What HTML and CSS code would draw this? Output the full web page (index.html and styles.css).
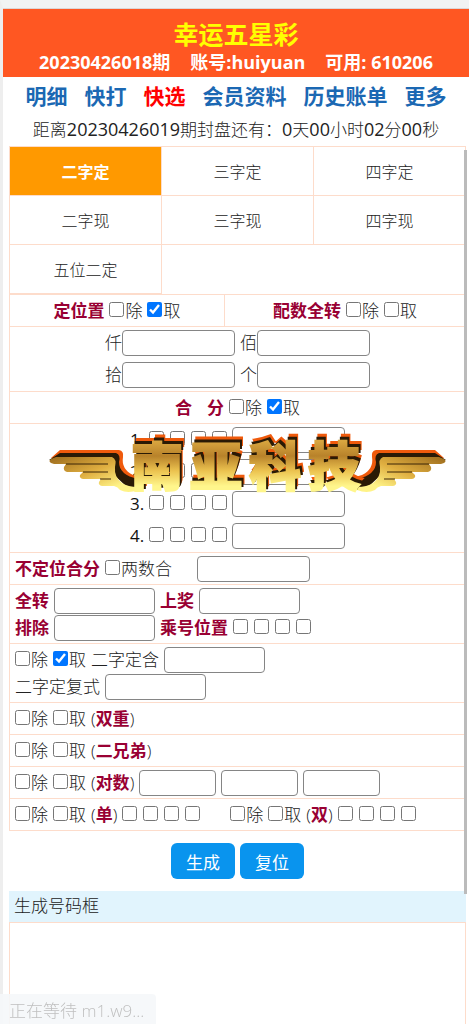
FILE: index.html
```html
<!DOCTYPE html>
<html lang="zh-CN">
<head>
    <meta charset="UTF-8">
    <meta name="viewport" content="width=device-width, initial-scale=1.0">
    <title>幸运五星彩</title>
    <link rel="stylesheet" href="styles.css">
</head>
<body>
    <header class="header">
        <h1>幸运五星彩</h1>
        <div class="account">
            <span>20230426018期</span>
            <span>账号:huiyuan</span>
            <span>可用: 610206</span>
        </div>
    </header>
    <nav class="nav">
        <a href="#">明细</a>
        <a href="#">快打</a>
        <a href="#" class="active">快选</a>
        <a href="#">会员资料</a>
        <a href="#">历史账单</a>
        <a href="#">更多</a>
    </nav>
    <div class="countdown">距离<span>20230426019</span>期封盘还有：<span>0</span>天<span>00</span>小时<span>02</span>分<span>00</span>秒</div>

    <main class="content">
        <div class="tabs">
            <button type="button" class="tab active">二字定</button>
            <button type="button" class="tab">三字定</button>
            <button type="button" class="tab">四字定</button>
            <button type="button" class="tab">二字现</button>
            <button type="button" class="tab">三字现</button>
            <button type="button" class="tab">四字现</button>
            <button type="button" class="tab">五位二定</button>
        </div>

        <form id="pickForm">
            <div class="panel split">
                <div class="line center">
                    <b>定位置</b>
                    <label><input type="checkbox">除</label>
                    <label><input type="checkbox" checked>取</label>
                </div>
                <div class="line center">
                    <b>配数全转</b>
                    <label><input type="checkbox">除</label>
                    <label><input type="checkbox">取</label>
                </div>
            </div>

            <div class="panel digits">
                <div class="line center">
                    <label class="field">仟<input type="text"></label>
                    <label class="field">佰<input type="text"></label>
                </div>
                <div class="line center">
                    <label class="field">拾<input type="text"></label>
                    <label class="field">个<input type="text"></label>
                </div>
            </div>

            <div class="panel">
                <div class="line center">
                    <b class="spread"><span>合</span><span>分</span></b>
                    <label><input type="checkbox">除</label>
                    <label><input type="checkbox" checked>取</label>
                </div>
            </div>

            <div class="panel sums">
                <div class="line center">
                    <span class="index">1.</span>
                    <span class="boxes"><input type="checkbox" aria-label="仟"><input type="checkbox" aria-label="佰"><input type="checkbox" aria-label="拾"><input type="checkbox" aria-label="个"></span>
                    <input type="text" aria-label="合分1">
                </div>
                <div class="line center">
                    <span class="index">2.</span>
                    <span class="boxes"><input type="checkbox" aria-label="仟"><input type="checkbox" aria-label="佰"><input type="checkbox" aria-label="拾"><input type="checkbox" aria-label="个"></span>
                    <input type="text" aria-label="合分2">
                </div>
                <div class="line center">
                    <span class="index">3.</span>
                    <span class="boxes"><input type="checkbox" aria-label="仟"><input type="checkbox" aria-label="佰"><input type="checkbox" aria-label="拾"><input type="checkbox" aria-label="个"></span>
                    <input type="text" aria-label="合分3">
                </div>
                <div class="line center">
                    <span class="index">4.</span>
                    <span class="boxes"><input type="checkbox" aria-label="仟"><input type="checkbox" aria-label="佰"><input type="checkbox" aria-label="拾"><input type="checkbox" aria-label="个"></span>
                    <input type="text" aria-label="合分4">
                </div>

                <!-- winged gold logo over the form -->
                <svg class="logo" width="400" height="58" viewBox="0 0 400 58">
                    <defs>
                        <linearGradient id="gold" x1="0" y1="0" x2="0" y2="1">
                            <stop offset="0.2" stop-color="#d9a640"/>
                            <stop offset="0.4" stop-color="#b8822a"/>
                            <stop offset="0.6" stop-color="#ecc350"/>
                            <stop offset="0.8" stop-color="#fff68c"/>
                        </linearGradient>
                        <linearGradient id="wingGold" x1="0" y1="0" x2="1" y2="1">
                            <stop offset="0" stop-color="#9b6a1c"/>
                            <stop offset="0.45" stop-color="#dfae40"/>
                            <stop offset="0.8" stop-color="#fff387"/>
                        </linearGradient>
                        <g id="wing">
                            <path fill="#ef5a0c" d="M3 19 L12 11 H71 Q76 12 75 18 Q73 30 85 36 L92 38 V44 L76 42 L66 28 V18 Z"/>
                            <path fill="#2a1a05" d="M1 21 L12 14 H68 Q73 16 71 23 Q71 36 90 40 V49 H80 L64 34 V22 Z"/>
                            <path fill="url(#wingGold)" d="M3 24 Q0 22 3 20 L8 18 H64 Q69 20 67 28 Q66 38 74 44 Q80 48 90 48 V51 Q80 55 72 51 Q70 48 66 47 H54 Q50 46 51 43 L53 40 H35 Q31 39 32 36 L35 33 H19 Q15 32 16 28 L18 25 H6 Z"/>
                            <path fill="none" stroke="#3a2407" stroke-width="1" d="M18 25 H60 M35 33 H60 M52 40 H63"/>
                        </g>
                    </defs>
                    <use href="#wing"/>
                    <use href="#wing" transform="translate(399 0) scale(-1 1)"/>
                    <g class="logo-text">
                        <text class="glow" x="86 145 204 263" y="41">南亚科技</text>
                        <text class="shade" x="85 144 203 262" y="44">南亚科技</text>
                        <text class="face" x="83 142 201 260" y="47">南亚科技</text>
                    </g>
                </svg>
            </div>

            <div class="panel">
                <div class="line">
                    <b>不定位合分</b>
                    <label><input type="checkbox">两数合</label>
                    <input type="text" class="far" aria-label="不定位合分">
                </div>
            </div>

            <div class="panel tight">
                <div class="line">
                    <label class="bold">全转<input type="text" class="mid"></label>
                    <label class="bold">上奖<input type="text" class="mid"></label>
                </div>
                <div class="line">
                    <label class="bold">排除<input type="text" class="mid"></label>
                    <b>乘号位置</b>
                    <span class="boxes"><input type="checkbox" aria-label="仟"><input type="checkbox" aria-label="佰"><input type="checkbox" aria-label="拾"><input type="checkbox" aria-label="个"></span>
                </div>
            </div>

            <div class="panel tight">
                <div class="line">
                    <label><input type="checkbox">除</label>
                    <label><input type="checkbox" checked>取</label>
                    <label class="named">二字定含<input type="text" class="mid"></label>
                </div>
                <div class="line">
                    <label class="named">二字定复式<input type="text" class="mid"></label>
                </div>
            </div>

            <div class="panel">
                <div class="line">
                    <label><input type="checkbox">除</label>
                    <label><input type="checkbox">取</label>
                    <span>(<b>双重</b>)</span>
                </div>
            </div>
            <div class="panel">
                <div class="line">
                    <label><input type="checkbox">除</label>
                    <label><input type="checkbox">取</label>
                    <span>(<b>二兄弟</b>)</span>
                </div>
            </div>
            <div class="panel">
                <div class="line">
                    <label><input type="checkbox">除</label>
                    <label><input type="checkbox">取</label>
                    <span>(<b>对数</b>)</span>
                    <input type="text" class="small" aria-label="对数1">
                    <input type="text" class="small" aria-label="对数2">
                    <input type="text" class="small" aria-label="对数3">
                </div>
            </div>
            <div class="panel last">
                <div class="line">
                    <label><input type="checkbox">除</label>
                    <label><input type="checkbox">取</label>
                    <span>(<b>单</b>)</span>
                    <span class="boxes"><input type="checkbox" aria-label="仟"><input type="checkbox" aria-label="佰"><input type="checkbox" aria-label="拾"><input type="checkbox" aria-label="个"></span>
                    <label class="far"><input type="checkbox">除</label>
                    <label><input type="checkbox">取</label>
                    <span>(<b>双</b>)</span>
                    <span class="boxes"><input type="checkbox" aria-label="仟"><input type="checkbox" aria-label="佰"><input type="checkbox" aria-label="拾"><input type="checkbox" aria-label="个"></span>
                </div>
            </div>

            <div class="actions">
                <button type="submit" class="btn">生成</button>
                <button type="reset" class="btn">复位</button>
            </div>
        </form>

        <h2 class="result-title">生成号码框</h2>
        <div class="result"></div>
        <div class="scrollbar"></div>
    </main>

    <div class="status">正在等待 m1.w9...</div>

    <script>
        document.getElementById("pickForm").addEventListener("submit", function (event) {
            event.preventDefault();
        });
    </script>
</body>
</html>
```
FILE: styles.css
```css
* {
    margin: 0;
    padding: 0;
    box-sizing: border-box;
}

body {
    display: flex;
    flex-direction: column;
    height: 100vh;
    overflow: hidden;
    border-top: 8px solid #f1f3f3;
    border-left: 3px solid #eeeeee;
    background: white;
    color: #222;
    font-family: "Open Sans", "Noto Sans CJK SC", sans-serif;
    font-size: 17px;
    font-weight: 300;
    line-height: 26px;
}

.header {
    height: 69px;
    padding-top: 10px;
    background-color: #ff5722;
    border-top: 1px solid #dcd6d6;
    color: white;
    text-align: center;
}

h1 {
    color: yellow;
    font-size: 25px;
    line-height: 30px;
}

.account {
    display: flex;
    justify-content: center;
    gap: 20px;
    font-size: 18px;
    font-weight: bold;
    line-height: 26px;
}

.nav {
    display: flex;
    justify-content: center;
    gap: 17px;
    padding-top: 4px;
}

.nav a {
    color: #1b68b3;
    font-size: 21px;
    font-weight: bold;
    line-height: 30px;
    text-decoration: none;
}

.nav a.active {
    color: red;
}

.countdown {
    padding: 5px 0 3px;
    text-align: center;
}

.countdown span {
    font-size: 18px;
    font-weight: 400;
}

.content {
    position: relative;
    display: flex;
    flex: 1;
    flex-direction: column;
    min-height: 0;
    margin: 0 3px 0 6px;
}

.tabs {
    display: grid;
    grid-template-columns: repeat(3, 1fr);
    border-top: 1px solid #fddccb;
    border-left: 1px solid #fddccb;
}

.tab {
    height: 49px;
    background: white;
    border: none;
    border-right: 1px solid #fddccb;
    border-bottom: 1px solid #fddccb;
    color: #222;
    font-family: inherit;
    font-size: 16px;
    font-weight: inherit;
    cursor: pointer;
}

.tab.active {
    background-color: #ff9900;
    color: white;
    font-weight: bold;
}

.panel {
    position: relative;
    padding: 0 5px;
    border: 1px solid #fddccb;
    border-bottom: none;
}

.panel.last {
    border-bottom: 1px solid #fddccb;
}

.line {
    display: flex;
    align-items: center;
    gap: 5px;
    height: 31px;
}

.center {
    justify-content: center;
}

.split {
    display: grid;
    grid-template-columns: 47fr 53fr;
    padding: 0;
}

.split .line + .line {
    border-left: 1px solid #fddccb;
}

.digits .line,
.sums .line {
    height: 32px;
}

.tight {
    padding-top: 2px;
    padding-bottom: 2px;
}

.tight .line {
    height: 27px;
}

b,
.bold {
    color: #990033;
    font-weight: bold;
}

label {
    display: flex;
    align-items: center;
    gap: 1px;
}

.field {
    gap: 0;
}

.bold,
.named {
    gap: 5px;
}

.spread {
    display: flex;
    gap: 15px;
}

.index {
    color: #111;
    font-weight: 400;
}

.boxes {
    display: flex;
    gap: 6px;
}

input[type="checkbox"] {
    width: 15px;
    height: 15px;
    margin-bottom: 3px;
}

input[type="text"] {
    width: 113px;
    height: 26px;
    background: white;
    border: 1px solid #858585;
    border-radius: 4px;
}

input[type="text"].mid {
    width: 101px;
}

input[type="text"].small {
    width: 77px;
}

.line .far {
    margin-left: 20px;
}

.boxes + .far {
    margin-left: 25px;
}

.logo {
    position: absolute;
    top: 15px;
    left: 38px;
    overflow: visible;
}

.logo-text {
    font-family: "Noto Sans CJK SC", sans-serif;
    font-size: 52px;
    font-weight: 900;
}

.glow {
    fill: #ef5a0c;
    stroke: #ef5a0c;
    stroke-width: 2px;
}

.shade {
    fill: #2a1a05;
    stroke: #2a1a05;
    stroke-width: 2px;
}

.face {
    fill: url(#gold);
    stroke: url(#gold);
    stroke-width: 2px;
}

.actions {
    display: flex;
    justify-content: center;
    gap: 5px;
    padding: 12px 0;
}

.btn {
    width: 64px;
    height: 36px;
    background-color: #0994ee;
    border: none;
    border-radius: 6px;
    color: white;
    font-family: inherit;
    font-size: 17px;
    cursor: pointer;
}

.result-title {
    padding: 2px 5px 3px;
    background-color: #e1f4fd;
    font-size: 17px;
    font-weight: 300;
}

.result {
    flex: 1;
    border: 1px solid #fddccb;
    border-bottom: none;
}

.scrollbar {
    position: absolute;
    top: 4px;
    right: -1px;
    width: 3px;
    height: 744px;
    background-color: #bbb;
}

.status {
    position: fixed;
    bottom: 0;
    left: 0;
    width: 156px;
    height: 30px;
    padding: 4px 9px;
    background-color: rgba(245, 247, 249, 0.9);
    border-top-right-radius: 4px;
    color: #c0c0c0;
    white-space: nowrap;
}
```
